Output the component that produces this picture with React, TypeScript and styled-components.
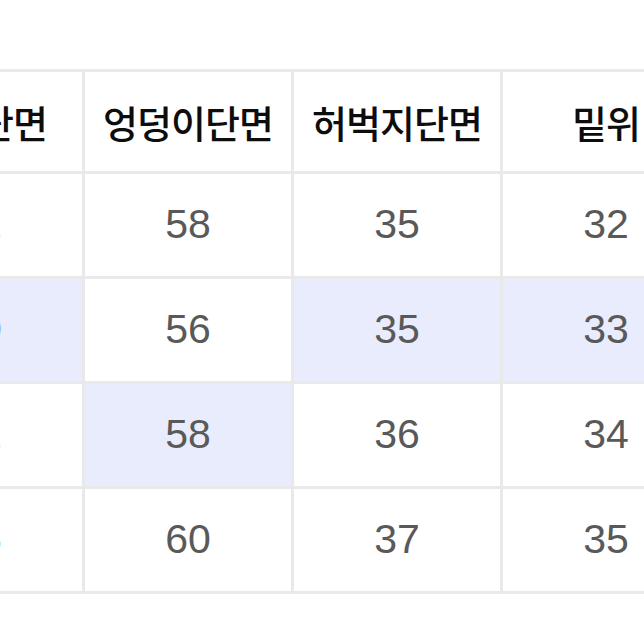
import React from 'react';
import styled, { createGlobalStyle } from 'styled-components';

const GlobalStyle = createGlobalStyle`
  html, body {
    margin: 0;
    padding: 0;
    background: #ffffff;
  }
  body {
    width: 644px;
    height: 644px;
    overflow: hidden;
  }
`;

const Page = styled.div`
  width: 644px;
  height: 644px;
  overflow: hidden;
  background: #ffffff;
  padding-top: 69px;
  box-sizing: border-box;
`;

const SizeGrid = styled.div`
  display: grid;
  grid-template-columns: repeat(4, 206px);
  grid-template-rows: 99px repeat(4, 102px);
  gap: 3px;
  padding: 3px;
  width: max-content;
  margin-left: -127px;
  background: #e9e9e9;
`;

const HeadCell = styled.div`
  display: flex;
  align-items: center;
  justify-content: center;
  background: #ffffff;
  color: #0d0d0d;
  font-family: "Noto Sans CJK KR", "Noto Sans", sans-serif;
  font-size: 38px;
  font-weight: 500;
  letter-spacing: -1px;
`;

const Cell = styled.div<{ $marked?: boolean }>`
  display: flex;
  align-items: center;
  justify-content: center;
  padding-bottom: 2px;
  background: ${p => (p.$marked ? '#e8ecfc' : '#ffffff')};
  color: #595959;
  font-family: "Liberation Sans", "Roboto", sans-serif;
  font-size: 41px;
  font-weight: 400;
`;

const headers = ['허리단면', '엉덩이단면', '허벅지단면', '밑위'];

const rows: { values: number[]; marked: boolean[] }[] = [
  { values: [32, 58, 35, 32], marked: [false, false, false, false] },
  { values: [30, 56, 35, 33], marked: [true, false, true, true] },
  { values: [31, 58, 36, 34], marked: [false, true, false, false] },
  { values: [35, 60, 37, 35], marked: [false, false, false, false] },
];

const App: React.FC = () => {
  return (
    <>
      <GlobalStyle />
      <Page>
        <SizeGrid>
          {headers.map(h => (
            <HeadCell key={h}>{h}</HeadCell>
          ))}
          {rows.map((row, r) =>
            row.values.map((v, c) => (
              <Cell key={`${r}-${c}`} $marked={row.marked[c]}>
                {v}
              </Cell>
            ))
          )}
        </SizeGrid>
      </Page>
    </>
  );
};

export default App;
